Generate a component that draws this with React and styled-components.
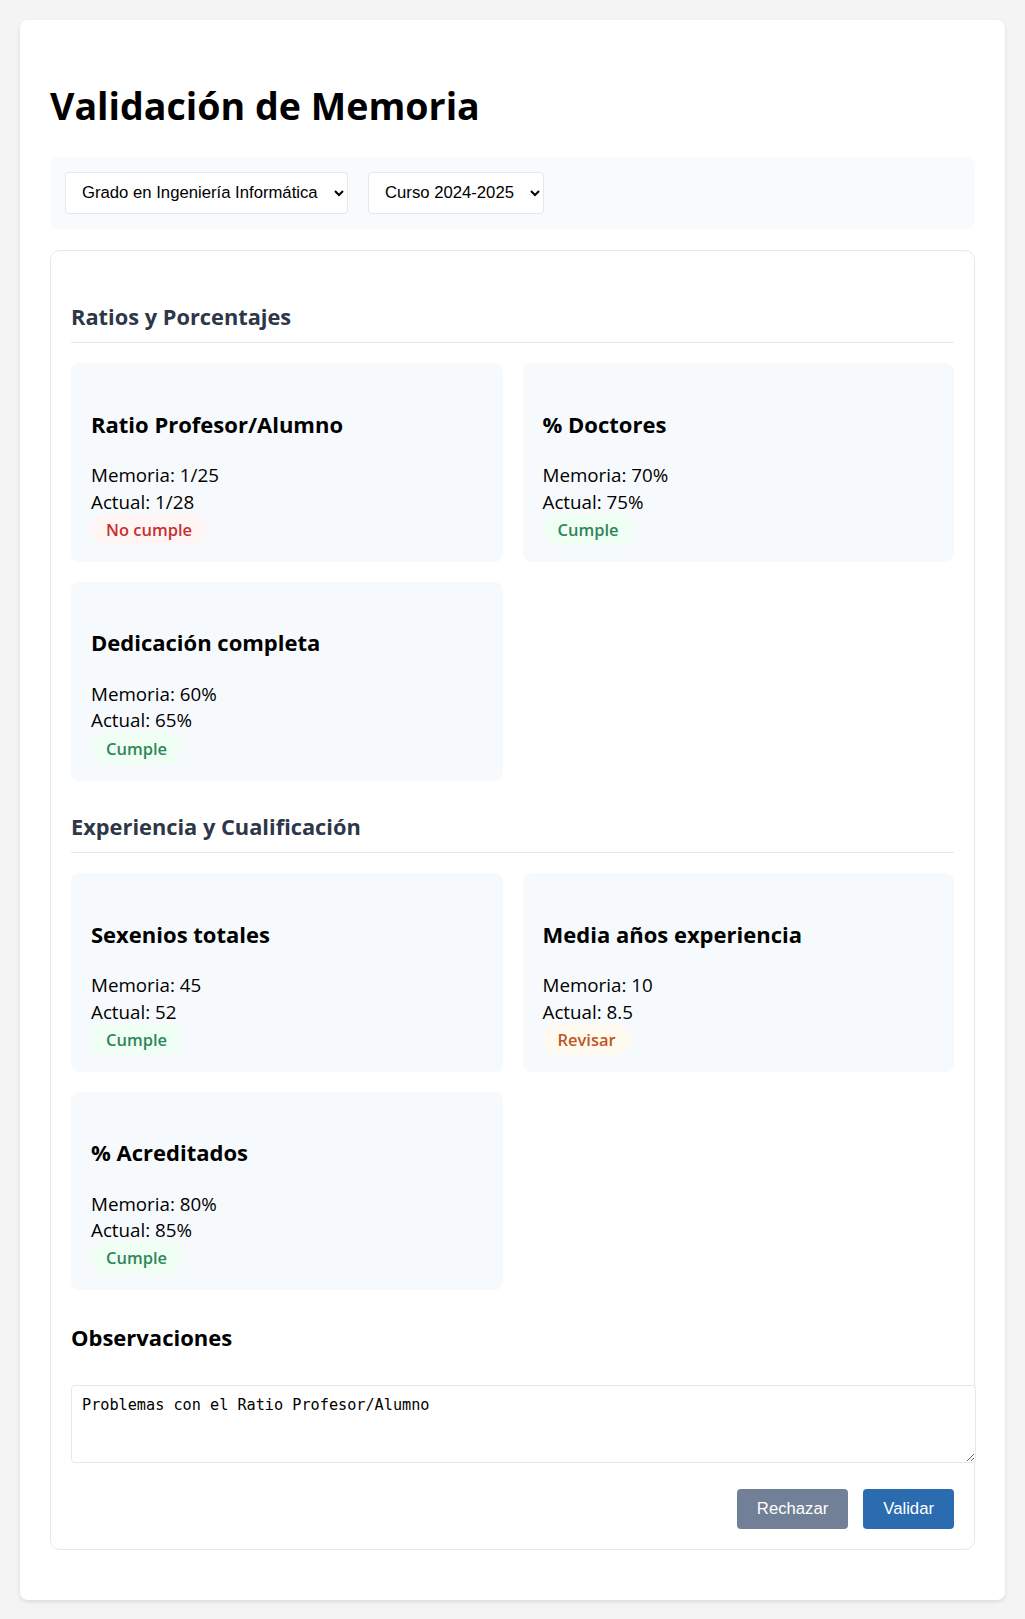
import React, { useState } from "react";
import styled, { createGlobalStyle } from "styled-components";

const GlobalStyle = createGlobalStyle`
  * { box-sizing: border-box; }
  body {
    margin: 0;
    padding: 20px;
    background: #f4f4f4;
    font-family: "Open Sans", "Noto Sans", sans-serif;
    font-size: 18.8px;
    color: #000;
  }
`;

const sections = [
  {
    title: "Ratios y Porcentajes",
    items: [
      { name: "Ratio Profesor/Alumno", memoria: "1/25", actual: "1/28", status: "fail" },
      { name: "% Doctores", memoria: "70%", actual: "75%", status: "ok" },
      { name: "Dedicación completa", memoria: "60%", actual: "65%", status: "ok" },
    ],
  },
  {
    title: "Experiencia y Cualificación",
    items: [
      { name: "Sexenios totales", memoria: "45", actual: "52", status: "ok" },
      { name: "Media años experiencia", memoria: "10", actual: "8.5", status: "review" },
      { name: "% Acreditados", memoria: "80%", actual: "85%", status: "ok" },
    ],
  },
];

const statusLabel = { ok: "Cumple", fail: "No cumple", review: "Revisar" };
const statusColors = {
  ok: { bg: "#f0fff4", fg: "#2f855a" },
  fail: { bg: "#fff5f5", fg: "#c53030" },
  review: { bg: "#fffaf0", fg: "#c05621" },
};

const Page = styled.div`
  background: #fff;
  border-radius: 8px;
  padding: 30px;
  box-shadow: 0 2px 4px rgba(0, 0, 0, 0.1);
`;

const Title = styled.h1`
  margin: 34.3px 0 28.7px;
  font-size: 37.6px;
  line-height: 44px;
  font-weight: 700;
`;

const Filters = styled.div`
  display: flex;
  gap: 20px;
  padding: 15px;
  background: #f8fafc;
  border-radius: 8px;
  margin-bottom: 21px;
`;

const Select = styled.select`
  height: 42px;
  padding: 0 13px 0 12px;
  font-family: "Liberation Sans", Arial, sans-serif;
  font-size: 16.7px;
  color: #000;
  background: #fff;
  border: 1px solid #e2e8f0;
  border-radius: 4px;
`;

const Panel = styled.section`
  border: 1px solid #e2e8f0;
  border-radius: 10px;
  padding: 20px;
  margin-bottom: 20px;
`;

const SectionTitle = styled.h2`
  margin: 31.5px 0 20px;
  padding-bottom: 10px;
  border-bottom: 1px solid #e2e8f0;
  font-size: 21.8px;
  line-height: 30px;
  font-weight: 700;
  color: #2d3748;
`;

const Grid = styled.div`
  display: grid;
  grid-template-columns: 1fr 1fr;
  gap: 20px;
`;

const Card = styled.div`
  display: flex;
  flex-direction: column;
  align-items: flex-start;
  background: #f7fafc;
  border-radius: 8px;
  padding: 20px 20px 16.6px;
`;

const CardTitle = styled.h3`
  margin: 26.4px 0 24.5px;
  font-size: 22px;
  line-height: 28px;
  font-weight: 700;
`;

const Value = styled.p`
  margin: 0;
  line-height: 26.5px;
`;

const Badge = styled.span`
  margin-top: -1.4px;
  padding: 0 15px;
  line-height: 31.5px;
  border-radius: 16px;
  font-size: 16.5px;
  font-weight: 600;
  background: ${(p) => statusColors[p.$status].bg};
  color: ${(p) => statusColors[p.$status].fg};
`;

const NotesTitle = styled.h3`
  margin: 33px 0 34px;
  font-size: 22px;
  line-height: 28px;
  font-weight: 700;
`;

const Notes = styled.textarea`
  display: block;
  box-sizing: content-box;
  width: 100%;
  height: 56px;
  margin: 0;
  padding: 10px;
  border: 1px solid #e2e8f0;
  border-radius: 4px;
  font-family: "DejaVu Sans Mono", monospace;
  font-size: 15.2px;
  color: #000;
`;

const Actions = styled.div`
  display: flex;
  justify-content: flex-end;
  gap: 15px;
  margin-top: 26px;
`;

const Button = styled.button`
  height: 40px;
  padding: 0 20px;
  border: none;
  border-radius: 4px;
  font-family: "Liberation Sans", Arial, sans-serif;
  font-size: 16.7px;
  color: #fff;
  background: ${(p) => (p.$primary ? "#2b6cb0" : "#718096")};
  cursor: pointer;
`;

const MetricCard = ({ item }) => (
  <Card>
    <CardTitle>{item.name}</CardTitle>
    <Value>Memoria: {item.memoria}</Value>
    <Value>Actual: {item.actual}</Value>
    <Badge $status={item.status}>{statusLabel[item.status]}</Badge>
  </Card>
);

export default function App() {
  const [grado, setGrado] = useState("inf");
  const [curso, setCurso] = useState("2024");
  const [notes, setNotes] = useState("Problemas con el Ratio Profesor/Alumno");

  return (
    <>
      <GlobalStyle />
      <Page>
        <Title>Validación de Memoria</Title>
        <Filters>
          <Select value={grado} onChange={(e) => setGrado(e.target.value)}>
            <option value="inf">Grado en Ingeniería Informática</option>
            <option value="mat">Grado en Matemáticas</option>
            <option value="fis">Grado en Física</option>
          </Select>
          <Select value={curso} onChange={(e) => setCurso(e.target.value)}>
            <option value="2024">Curso 2024-2025</option>
            <option value="2023">Curso 2023-2024</option>
          </Select>
        </Filters>
        <Panel>
          {sections.map((s) => (
            <div key={s.title}>
              <SectionTitle>{s.title}</SectionTitle>
              <Grid>
                {s.items.map((it) => (
                  <MetricCard key={it.name} item={it} />
                ))}
              </Grid>
            </div>
          ))}
          <NotesTitle>Observaciones</NotesTitle>
          <Notes value={notes} onChange={(e) => setNotes(e.target.value)} />
          <Actions>
            <Button>Rechazar</Button>
            <Button $primary>Validar</Button>
          </Actions>
        </Panel>
      </Page>
    </>
  );
}
